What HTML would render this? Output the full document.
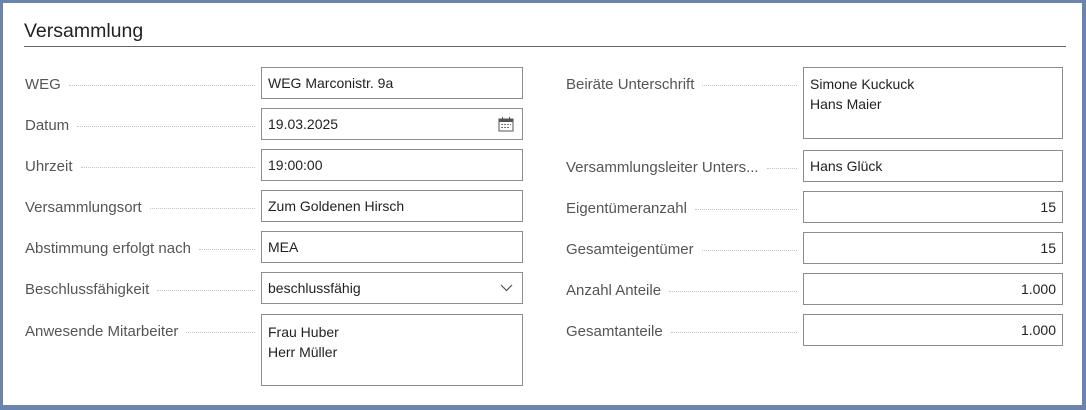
<!DOCTYPE html>
<html><head><meta charset="utf-8"><style>
*{margin:0;padding:0;box-sizing:border-box}
body{width:1086px;height:410px;background:#fff;font-family:"Liberation Sans",sans-serif;position:relative;overflow:hidden}
.frame{position:absolute;left:0;top:0;width:1086px;height:410px;border:3px solid #6a84ad;border-right-width:4px;border-bottom-width:5px}
.title{position:absolute;left:24px;top:20px;font-size:19.5px;color:#222}
.rule{position:absolute;left:24px;top:46px;width:1042px;height:1px;background:#666}
.lbl{position:absolute;font-size:15px;color:#555;height:32px;line-height:32px;display:flex;padding-top:2px}
.lbl span{white-space:nowrap;padding-right:8px}
.lbl i{flex:1;border-bottom:1px dotted #c4c4c4;height:17px;margin-right:6px}
.inp{position:absolute;border:1px solid #8c8c8c;font-size:14px;color:#222;padding:0 6px;line-height:30px;height:32px;background:#fff}
.r{text-align:right}
</style></head><body>
<div class="frame"></div>
<div class="title">Versammlung</div>
<div class="rule"></div>

<div class="lbl" style="left:25px;top:67px;width:236px"><span>WEG</span><i></i></div>
<div class="inp" style="left:261px;top:67px;width:262px">WEG Marconistr. 9a</div>
<div class="lbl" style="left:25px;top:108px;width:236px"><span>Datum</span><i></i></div>
<div class="inp" style="left:261px;top:108px;width:262px">19.03.2025
<svg style="position:absolute;right:8px;top:8px" width="16" height="15" viewBox="0 0 16 15"><rect x="1" y="2" width="14" height="12" fill="none" stroke="#555"/><rect x="1" y="2" width="14" height="3" fill="#555"/><g fill="#777"><rect x="3" y="7" width="2" height="1"/><rect x="6" y="7" width="2" height="1"/><rect x="9" y="7" width="2" height="1"/><rect x="12" y="7" width="1" height="1"/><rect x="3" y="10" width="2" height="1"/><rect x="6" y="10" width="2" height="1"/><rect x="9" y="10" width="2" height="1"/></g><rect x="4" y="0" width="1" height="3" fill="#555"/><rect x="11" y="0" width="1" height="3" fill="#555"/></svg></div>
<div class="lbl" style="left:25px;top:149px;width:236px"><span>Uhrzeit</span><i></i></div>
<div class="inp" style="left:261px;top:149px;width:262px">19:00:00</div>
<div class="lbl" style="left:25px;top:190px;width:236px"><span>Versammlungsort</span><i></i></div>
<div class="inp" style="left:261px;top:190px;width:262px">Zum Goldenen Hirsch</div>
<div class="lbl" style="left:25px;top:231px;width:236px"><span>Abstimmung erfolgt nach</span><i></i></div>
<div class="inp" style="left:261px;top:231px;width:262px">MEA</div>
<div class="lbl" style="left:25px;top:272px;width:236px"><span>Beschlussfähigkeit</span><i></i></div>
<div class="inp" style="left:261px;top:272px;width:262px">beschlussfähig
<svg style="position:absolute;right:9px;top:11px" width="13" height="8" viewBox="0 0 13 8"><path d="M1 1l5.5 5.5L12 1" fill="none" stroke="#555" stroke-width="1.2"/></svg></div>
<div class="lbl" style="left:25px;top:314px;width:236px"><span>Anwesende Mitarbeiter</span><i></i></div>
<div class="inp" style="left:261px;top:314px;width:262px;height:72px;line-height:20px;padding-top:7px">Frau Huber<br>Herr Müller</div>

<div class="lbl" style="left:566px;top:67px;width:237px"><span>Beiräte Unterschrift</span><i></i></div>
<div class="inp" style="left:803px;top:67px;width:260px;height:72px;line-height:20px;padding-top:6px">Simone Kuckuck<br>Hans Maier</div>
<div class="lbl" style="left:566px;top:150px;width:237px"><span>Versammlungsleiter Unters...</span><i></i></div>
<div class="inp" style="left:803px;top:150px;width:260px">Hans Glück</div>
<div class="lbl" style="left:566px;top:191px;width:237px"><span>Eigentümeranzahl</span><i></i></div>
<div class="inp r" style="left:803px;top:191px;width:260px">15</div>
<div class="lbl" style="left:566px;top:232px;width:237px"><span>Gesamteigentümer</span><i></i></div>
<div class="inp r" style="left:803px;top:232px;width:260px">15</div>
<div class="lbl" style="left:566px;top:273px;width:237px"><span>Anzahl Anteile</span><i></i></div>
<div class="inp r" style="left:803px;top:273px;width:260px">1.000</div>
<div class="lbl" style="left:566px;top:314px;width:237px"><span>Gesamtanteile</span><i></i></div>
<div class="inp r" style="left:803px;top:314px;width:260px">1.000</div>
</body></html>
